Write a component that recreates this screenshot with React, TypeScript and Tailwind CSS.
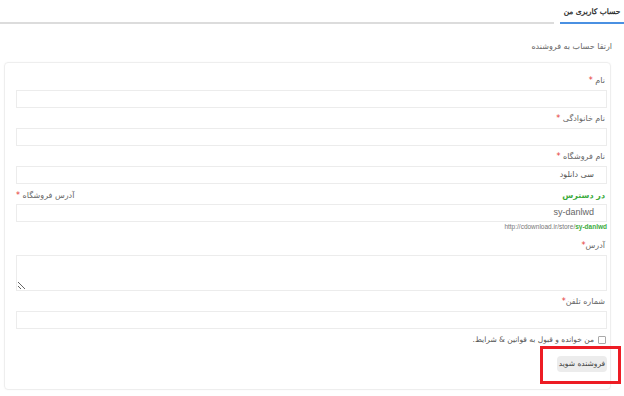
import React from "react"

function Star() {
  return <span className="text-[#e53935]">*</span>
}

function Field({ label, value, mb = "mb-[5px]" }: { label: React.ReactNode; value?: string; mb?: string }) {
  return (
    <div className={mb}>
      <div className="h-3 leading-3 pr-[2px] text-[8px] text-[#666]">{label}</div>
      <div className="mt-[3px] h-[18px] border border-[#ececec] flex items-center pr-3 text-[8px] text-[#555]">
        {value}
      </div>
    </div>
  )
}

export default function App() {
  return (
    <div dir="rtl" className="w-[624px] h-[396px] bg-white overflow-hidden font-['DejaVu_Sans',sans-serif] text-[#555]">
      {/* tabs */}
      <div className="flex h-6 pt-[2px]">
        <div className="w-[64px] border-b-2 border-[#4a90e2] flex items-center justify-center whitespace-nowrap text-[7.5px] text-[#222] [-webkit-text-stroke:0.25px_#222]">
          حساب کاربری من
        </div>
        <div className="w-[6px]" />
        <div className="flex-1 border-b-2 border-[#dcdcdc]" />
      </div>

      <div className="pr-3 mt-[17px] h-3 leading-3 text-[8px] text-[#666]">ارتقا حساب به فروشنده</div>

      {/* card */}
      <div className="mt-[9px] mr-[13px] ml-[4px] h-[328px] border border-[#eeeeee] rounded-sm shadow-[0_0_2px_rgba(0,0,0,0.04)] pt-[12px] pr-[3px] pl-[11px]">
        <Field label={<>نام <Star /></>} />
        <Field label={<>نام خانوادگی <Star /></>} />
        <Field label={<>نام فروشگاه <Star /></>} value="سی دانلود" mb="mb-[6px]" />

        <div>
          <div className="h-3 leading-3 flex justify-between text-[8px]">
            <span className="pr-[2px] text-[#3cab3c] font-bold">در دسترس</span>
            <span className="text-[#666]">آدرس فروشگاه <Star /></span>
          </div>
          <div className="mt-[2px] h-[18px] border border-[#ececec] flex items-center pr-3 text-[9px] text-[#666] font-['Liberation_Sans',sans-serif]">
            sy-danlwd
          </div>
          <div dir="ltr" className="h-[10px] leading-[10px] text-right text-[6.5px] text-[#777] font-['Liberation_Sans',sans-serif]">
            http://cdownload.ir/store/<span className="text-[#3cab3c] font-bold">sy-danlwd</span>
          </div>
        </div>

        <div className="mt-[8px] mb-[5px]">
          <div className="h-3 leading-3 pr-[2px] text-[8px] text-[#666]">آدرس<Star /></div>
          <textarea className="block mt-[3px] w-full h-[36px] border border-[#ececec] outline-none resize-y" />
        </div>

        <Field label={<>شماره تلفن<Star /></>} mb="mb-0" />

        <label className="mt-[5px] h-3 flex items-center gap-[4px] text-[7.5px] text-[#555] pr-[1px]">
          <input type="checkbox" className="appearance-none shrink-0 w-[8px] h-[8px] m-0 border border-[#aaa] rounded-[1px] bg-white" />
          <span>من خوانده و قبول به قوانین & شرایط.</span>
        </label>

        <div className="mt-[10px] flex">
          <div className="relative">
            <button className="block w-[50px] h-[16px] rounded-sm bg-[#ececec] text-[7.5px] text-[#444]">فروشنده شوید</button>
            <div className="absolute -top-[10px] -right-[14px] w-[81px] h-[38px] border-[3px] border-[#ed1c24] pointer-events-none" />
          </div>
        </div>
      </div>
    </div>
  )
}
